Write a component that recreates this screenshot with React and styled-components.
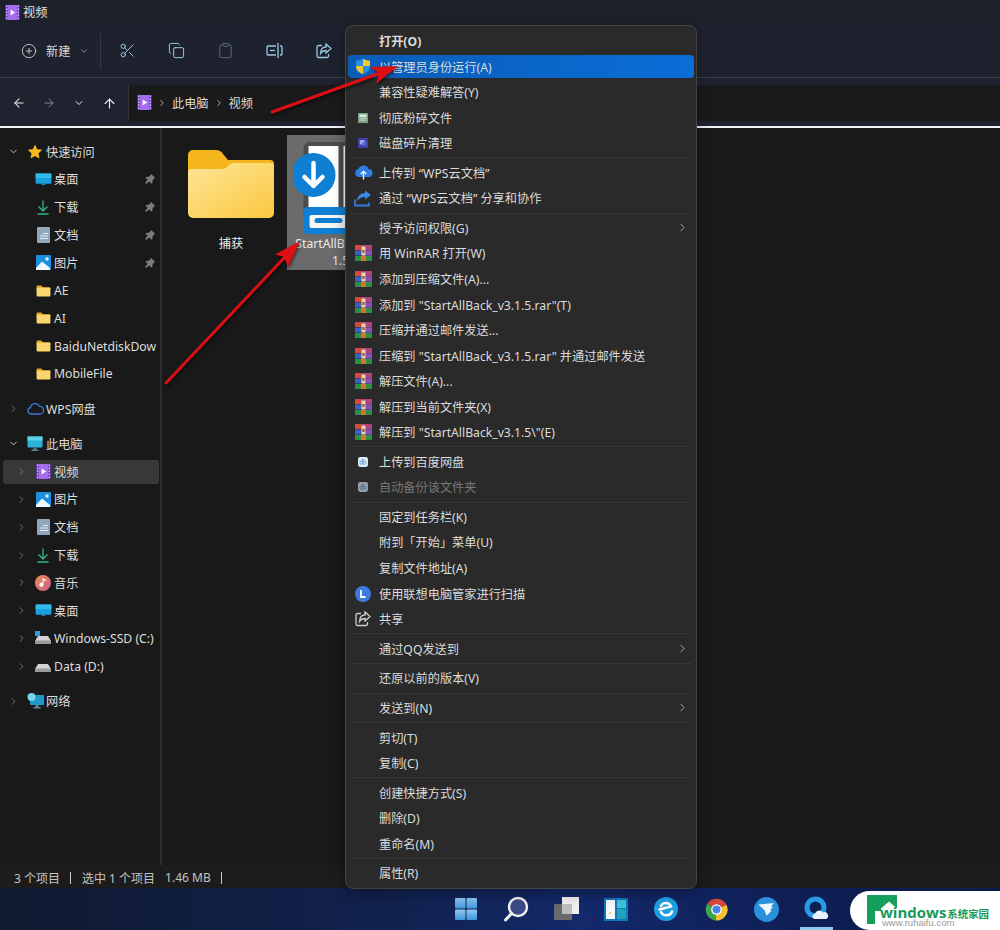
import React from "react";
import styled, { createGlobalStyle } from "styled-components";
import { ArrowLeft, ArrowRight, ArrowUp, ChevronDown, ChevronRight, CirclePlus, Scissors, Copy, Clipboard } from "lucide-react";

const Global = createGlobalStyle`
  html, body { margin: 0; padding: 0; background: #191919; }
  #root { width: 1000px; height: 930px; overflow: hidden; }
  * { box-sizing: border-box; }
`;

const FONT = `"Noto Sans", "Noto Sans CJK SC", sans-serif`;

const Page = styled.div`
  position: relative; width: 1000px; height: 930px; overflow: hidden;
  display: flex; flex-direction: column;
  font-family: ${FONT}; font-size: 12.2px; color: #e2e2e2; background: #191919;
`;
const TitleBar = styled.div`
  height: 26px; background: #1c212c; display: flex; align-items: center;
  padding: 0 0 2px 5px; gap: 3px;
`;
const Toolbar = styled.div`
  height: 52px; background: #1d222e; border-bottom: 1px solid #3c404b;
  display: flex; align-items: center; padding: 0 0 2px 21px;
`;
const NewButton = styled.div`display: flex; align-items: center; gap: 9px; color: #d9d9d9; width: 79px;`;
const ToolDivider = styled.div`width: 1px; height: 36px; background: #333844; margin-right: 2px;`;
const ToolSlot = styled.div`
  width: 49px; display: flex; justify-content: center; align-items: center;
  color: #98c8e2; opacity: ${p => (p.$dim ? 0.45 : 1)};
`;
const AddressBand = styled.div`
  height: 48px; background: #20232f; display: flex; padding: 7px 0 5px 0;
`;
const NavButtons = styled.div`width: 128px; display: flex; align-items: center; padding-left: 4px;`;
const NavSlot = styled.div`
  width: 30px; display: flex; align-items: center; justify-content: center;
  color: ${p => (p.$dim ? "#8a8d93" : "#ececec")};
`;
const AddressBox = styled.div`
  flex: 1; background: #1a1a1a; border-left: 1px solid #333;
  display: flex; align-items: center; padding: 0 0 1px 8px; gap: 5px;
`;
const Crumb = styled.span`color: #dcdcdc;`;
const WhiteLine = styled.div`height: 2px; background: #f2f2f2;`;
const Main = styled.div`flex: 1; min-height: 0; display: flex; background: #191919;`;
const Sidebar = styled.nav`
  width: 162px; padding: 9.800px 0 0 3px; border-right: 2px solid #2d2d2d;
  display: flex; flex-direction: column; overflow: hidden;
`;
const TreeRow = styled.div`
  width: 156px; height: 24px; flex: none; margin: ${p => (p.$gap ? "9.1px" : "1.9px")} 0 1.9px;
  display: flex; align-items: center; border-radius: 3px; overflow: hidden;
  padding-left: ${p => (p.$level ? 11 : 3)}px;
  background: ${p => (p.$selected ? "#383838" : "transparent")};
`;
const Twisty = styled.span`
  width: 14px; flex: none; display: flex; justify-content: center;
  color: ${p => (p.$open ? "#cfcfcf" : "#7d7d7d")};
`;
const TreeIcon = styled.span`
  width: 20px; height: 18px; margin-left: 5px; flex: none; display: flex; align-items: center; justify-content: center;
`;
const TreeLabel = styled.span`
  margin-left: 1px; white-space: nowrap; color: #dedede; flex: 0 0 auto;
`;
const PinMark = styled.span`
  position: absolute; left: 144px; display: flex;
`;
const Files = styled.section`
  flex: 1; padding: 7px 0 0 19px; display: flex; gap: 6px; align-items: flex-start;
`;
const Tile = styled.div`
  width: ${p => (p.$selected ? 107 : 100)}px; height: 135px; display: flex; flex-direction: column; align-items: center;
  padding-top: ${p => (p.$selected ? 7 : 15)}px;
  background: ${p => (p.$selected ? "#6b6b6b" : "transparent")};
`;
const TileIconWrap = styled.div`
  height: ${p => (p.$selected ? 93 : 85)}px; flex: none; width: 100%; display: flex; justify-content: center;
`;
const TileLabel = styled.div`
  text-align: center; line-height: 17px; color: #ececec; width: 96px; white-space: pre-line;
`;
const StatusBar = styled.div`
  height: 23px; background: #1c1c1c; display: flex; align-items: center; padding: 2px 0 0 14px; color: #c4c4c4; font-size: 12px;
`;
const StatusText = styled.span`margin-right: ${p => p.$gap || 0}px; white-space: pre;`;
const StatusBarTick = styled.span`width: 1px; height: 12px; background: #c8c8c8; margin-right: ${p => p.$gap || 0}px;`;
const Taskbar = styled.footer`
  height: 42px; display: flex; align-items: center; padding: 0 0 0 441px;
  background: linear-gradient(90deg, #101a30 0%, #11224f 40%, #13296a 58%, #0f1f55 80%, #0c1a48 100%);
`;
const TaskItem = styled.div`
  position: relative; width: 50px; height: 42px; display: flex; align-items: center; justify-content: center;
  ${p => p.$active && `&::after { content: ""; position: absolute; left: 9px; right: 8px; bottom: 0; height: 3px; background: #8fc9ee; }`}
`;
const Menu = styled.div`
  position: absolute; left: 345px; top: 25px; width: 352px; height: 864px; padding-top: 2.25px;
  background: #2a2a2a; border: 1px solid #434343; border-radius: 8px;
  box-shadow: 0 4px 14px rgba(0,0,0,.35);
  display: flex; flex-direction: column;
`;
const MenuRow = styled.div`
  height: 23px; flex: none; margin: 1.275px 2px; padding: 0 0 0 31px; position: relative;
  display: flex; align-items: center; border-radius: 4px; white-space: pre;
  color: ${p => (p.$disabled ? "#777" : "#dcdcdc")};
  font-weight: ${p => (p.$bold ? 700 : 400)};
  background: ${p => (p.$active ? "linear-gradient(90deg,#0a5cb6,#0a6ed8)" : "transparent")};
`;
const MenuIcon = styled.span`
  position: absolute; left: 3px; top: 0; width: 24px; height: 23px;
  display: flex; align-items: center; justify-content: center; opacity: ${p => (p.$dim ? 0.6 : 1)};
`;
const MenuArrow = styled.span`
  position: absolute; right: 5px; top: 5px; color: #cfcfcf; display: flex;
`;
const MenuSep = styled.div`height: 1px; flex: none; margin: 1.55px 5px; background: rgba(255,255,255,.065);`;
const Annotations = styled.svg`position: absolute; left: 0; top: 0; pointer-events: none;`;
const Watermark = styled.div`
  position: absolute; left: 850px; top: 891px; width: 150px; height: 39px; background: #fff;
  border-radius: 22px 0 0 22px; padding: 14px 0 0 30px; display: flex; flex-direction: column;
`;
const WatermarkLogo = styled.svg`position: absolute; left: 17px; top: 3px;`;
const BrandLine = styled.div`
  display: flex; align-items: baseline; color: #17995a; font-weight: 700; font-size: 15px; line-height: 14px; height: 13px;
  font-family: "Open Sans", sans-serif; position: relative;
`;
const BrandCJK = styled.span`font-size: 10.4px; font-family: "Noto Sans CJK SC", sans-serif; font-weight: 700; margin-left: 1px;`;
const BrandUrl = styled.div`color: #9a9a9a; font-size: 9.500px; line-height: 10px; font-family: "Liberation Sans", sans-serif; margin-left: 2px;`;

/* ---------- icons ---------- */
const VideoIcon = ({ s = 15 }) => (
  <svg width={s} height={s} viewBox="0 0 15 15">
    <rect x="0.5" y="0" width="14" height="15" fill="#7c3fc9" />
    <rect x="3" y="0" width="9" height="15" fill="#a56cf0" />
    {[1, 4, 7, 10, 13].map(y => <rect key={y} x="1" y={y - 0.5} width="1.4" height="1.4" fill="#d9c2ff" />)}
    {[1, 4, 7, 10, 13].map(y => <rect key={y} x="12.6" y={y - 0.5} width="1.4" height="1.4" fill="#d9c2ff" />)}
    <path d="M5.6 4.5 L10.2 7.5 L5.6 10.5Z" fill="#fff" />
  </svg>
);
const DesktopIcon = () => (
  <svg width="17" height="13" viewBox="0 0 18 14">
    <rect x="0.5" y="0.5" width="17" height="11" rx="1" fill="#18a1dc" />
    <rect x="0.5" y="0.5" width="17" height="5" rx="1" fill="#30bce8" />
    <rect x="7" y="11.5" width="4" height="1.5" fill="#2a7fae" />
  </svg>
);
const DownloadIcon = () => (
  <svg width="14" height="15" viewBox="0 0 14 15" fill="none" stroke="#35b48f" strokeWidth="1.3">
    <path d="M7 0.5V10.5M2.5 6.5L7 11L11.5 6.5M1.5 14H12.5" />
  </svg>
);
const DocIcon = () => (
  <svg width="13" height="16" viewBox="0 0 13 16">
    <rect width="13" height="16" rx="1" fill="#8fa6bd" />
    <path d="M6 6.5H11M3 9H11M3 11.5H11" stroke="#e7edf2" strokeWidth="1" />
  </svg>
);
const PictureIcon = () => (
  <svg width="15" height="15" viewBox="0 0 15 15">
    <rect width="15" height="15" rx="1" fill="#1d8fe0" />
    <circle cx="11" cy="4" r="1.7" fill="#dff3ff" />
    <path d="M0 13 L6 6.5 L14 13 V15 H0Z" fill="#eef8ff" />
  </svg>
);
const FolderSmall = () => (
  <svg width="15" height="12" viewBox="0 0 16 13">
    <path d="M0.5 1.5a1 1 0 0 1 1-1h4l2 2h7a1 1 0 0 1 1 1V5H0.5Z" fill="#e3a91e" />
    <rect x="0.5" y="3" width="15" height="9.5" rx="1" fill="#fbd66d" />
  </svg>
);
const StarIcon = () => (
  <svg width="16" height="15" viewBox="0 0 16 15"><path d="M8 0.5l2.2 4.7 5.1.6-3.8 3.5 1 5.1L8 11.9l-4.5 2.5 1-5.1L.7 5.8l5.1-.6Z" fill="#f7b91c" /></svg>
);
const PinIcon = () => (
  <svg width="12" height="12" viewBox="0 0 12 12" fill="#7c7c7c"><path d="M7 0.8l4.2 4.2-1.2.5-1.7 2.4.2 2.2-1 .6-2-2.3L2 11l-.9-.9 2.6-3.4-2.2-2 .6-1 2.2.2L6.700 2.100Z" /></svg>
);
const CloudOutline = () => (
  <svg width="17" height="13" viewBox="0 0 17 13" fill="none" stroke="#3f78d8" strokeWidth="1.3">
    <path d="M4 12a3.300 3.300 0 0 1-.5-6.500A4.700 4.700 0 0 1 12.400 4.400 3.800 3.800 0 0 1 13 12Z" />
  </svg>
);
const ComputerIcon = () => (
  <svg width="16" height="15" viewBox="0 0 16 15">
    <rect x="0.500" y="0.500" width="15" height="11" rx="1" fill="#2bb3d8" />
    <rect x="0.500" y="0.500" width="15" height="4" fill="#5ed0e8" />
    <path d="M6.500 11.500h3v2h-3zM4.500 13.500h7V15h-7z" fill="#5a7d92" />
  </svg>
);
const MusicIcon = () => (
  <svg width="16" height="16" viewBox="0 0 16 16">
    <defs><linearGradient id="mus" x1="0" y1="0" x2="1" y2="1"><stop offset="0" stopColor="#ef8d58" /><stop offset="1" stopColor="#c85f86" /></linearGradient></defs>
    <circle cx="8" cy="8" r="8" fill="url(#mus)" />
    <path d="M8.500 3.500v6.200a2 2 0 1 1-1-1.700V3.500Zm0 0 2.500 1.200v1.500L8.500 5Z" fill="#fff" />
  </svg>
);
const DriveIcon = ({ win }) => (
  <svg width="16" height="14" viewBox="0 0 16 14">
    {win && <rect x="0" y="0" width="5" height="5" fill="#2e9be0" />}
    <path d="M3 5h10l3 5H0Z" fill="#d4d4d4" />
    <rect x="0" y="9.500" width="16" height="3.500" rx="0.500" fill="#9a9a9a" />
  </svg>
);
const NetworkIcon = () => (
  <svg width="17" height="16" viewBox="0 0 17 16">
    <rect x="3" y="2" width="14" height="10" rx="1" fill="#1e9ac8" />
    <circle cx="4.500" cy="4" r="4" fill="#7bd3ea" />
    <path d="M8.500 12h3v2h-3zM6.500 14h7v1.500h-7z" fill="#5a8ca5" />
  </svg>
);
const RenameIcon = () => (
  <svg width="17" height="17" viewBox="0 0 17 17" fill="none" stroke="#98c8e2" strokeWidth="1.300">
    <path d="M10 4H2a1 1 0 0 0-1 1v7a1 1 0 0 0 1 1h8M14 4h1a1 1 0 0 1 1 1v7a1 1 0 0 1-1 1h-1M12 1v15" />
    <path d="M4 8.500h5" />
  </svg>
);
const ShareIcon = ({ c = "#98c8e2" }) => (
  <svg width="16" height="16" viewBox="0 0 16 16" fill="none" stroke={c} strokeWidth="1.300">
    <path d="M6 2.500H2.500a1.500 1.500 0 0 0-1.500 1.500v9a1.500 1.500 0 0 0 1.500 1.500h8.500a1.500 1.500 0 0 0 1.500-1.500v-2" />
    <path d="M10 1l5 4.500L10 10V7.500c-3 0-4.500 1.200-5.500 3 0-4 2-6.500 5.500-6.500Z" />
  </svg>
);
const ShieldIcon = () => (
  <svg width="16" height="17" viewBox="0 0 16 17">
    <path d="M8 0.500C6 2 3.500 2.500 1 2.500V9c0 3.500 3 6 7 7.500Z" fill="#2d8fe0" />
    <path d="M8 0.500c2 1.500 4.500 2 7 2V8H8Z" fill="#f4c430" />
    <path d="M8 8H1c0 4 3 6.500 7 8Z" fill="#f4c430" />
    <path d="M8 8h7c0 4-3 6.500-7 8Z" fill="#2d8fe0" />
  </svg>
);
const ShredIcon = () => (
  <svg width="10" height="10" viewBox="0 0 14 14">
    <rect width="14" height="14" fill="#7d9f8a" />
    <rect x="2" y="2" width="10" height="4" fill="#d8e8dc" />
    <path d="M2 8h10M2 10h10" stroke="#e6ecd8" strokeWidth="1" />
  </svg>
);
const DefragIcon = () => (
  <svg width="10" height="10" viewBox="0 0 14 14">
    <rect width="14" height="14" fill="#3c3fa8" />
    <rect x="2.500" y="3" width="7" height="6" fill="#9fa8e8" />
    <path d="M6 6h6v5H6Z" fill="#5a62cc" />
  </svg>
);
const CloudUp = () => (
  <svg width="19" height="15" viewBox="0 0 19 15">
    <path d="M5 12a4 4 0 0 1-.6-7.900A5.500 5.500 0 0 1 14.600 4 4 4 0 0 1 14.500 12Z" fill="#2f7de0" />
    <path d="M9.500 14.500V6.500M6.800 9L9.500 6.300 12.200 9" stroke="#fff" strokeWidth="1.300" fill="none" />
  </svg>
);
const ShareArrowBlue = () => (
  <svg width="18" height="17" viewBox="0 0 18 17" fill="none">
    <path d="M1 9.500v6h14v-3" stroke="#2f7de0" strokeWidth="1.800" />
    <path d="M11 0.500l6 4.500-6 4.500V7C7 7 4.500 8.500 3 11.500 3 6.500 6 3.500 11 3Z" fill="#3a8ae8" />
  </svg>
);
const RarIcon = () => (
  <svg width="17" height="16" viewBox="0 0 17 16">
    <rect x="0" y="0" width="17" height="5" fill="#b0427e" />
    <rect x="0" y="0" width="6" height="5" fill="#d44a3c" />
    <rect x="0" y="5.500" width="17" height="5" fill="#3a62c0" />
    <rect x="11" y="5.500" width="6" height="5" fill="#8a50b8" />
    <rect x="0" y="11" width="17" height="5" fill="#2d8f46" />
    <rect x="6" y="11" width="5" height="5" fill="#d8742a" />
    <rect x="6.500" y="1.500" width="4" height="9" fill="#e8d6b0" />
    <rect x="7.500" y="5" width="2" height="3" fill="#b04040" />
  </svg>
);
const BaiduIcon = () => (
  <svg width="10" height="10" viewBox="0 0 14 14">
    <rect width="14" height="14" rx="3" fill="#dcebf5" />
    <circle cx="5" cy="8" r="2.200" fill="none" stroke="#4a93d8" strokeWidth="1.200" />
    <circle cx="9" cy="8" r="2.200" fill="none" stroke="#7a9fc0" strokeWidth="1.200" />
    <circle cx="7" cy="5" r="1.700" fill="none" stroke="#4a93d8" strokeWidth="1" />
  </svg>
);
const LenovoIcon = () => (
  <svg width="16" height="16" viewBox="0 0 16 16">
    <circle cx="8" cy="8" r="8" fill="#3c7be0" />
    <path d="M6 4v7h4.500" stroke="#fff" strokeWidth="1.800" fill="none" />
  </svg>
);
const FolderLarge = () => (
  <svg width="86" height="68" viewBox="0 0 86 68">
    <defs>
      <linearGradient id="fld" x1="0" y1="0" x2="1" y2="1"><stop offset="0" stopColor="#fde596" /><stop offset="1" stopColor="#fbc83f" /></linearGradient>
    </defs>
    <path d="M0 5a5 5 0 0 1 5-5h23c3 0 5 1 7 4l5 6H82a4 4 0 0 1 4 4v20H0Z" fill="#f5b51c" />
    <path d="M0 22a3 3 0 0 1 3-3h30c3 0 5-1 7-3 2-2 3-3 6-3H82a4 4 0 0 1 4 4v46a5 5 0 0 1-5 5H5a5 5 0 0 1-5-5Z" fill="url(#fld)" />
  </svg>
);
const AppIcon = () => (
  <svg width="96" height="93" viewBox="3.500 0 96 93">
    <rect x="14" y="0" width="72" height="80" rx="6" fill="#4c4c4c" />
    <rect x="19" y="4" width="30" height="64" fill="#fff" />
    <rect x="54" y="4" width="28" height="64" fill="#fff" />
    <rect x="14" y="65" width="72" height="27" rx="4" fill="#0f7fd4" />
    <rect x="20" y="73" width="60" height="13" rx="2" fill="#f6f6f6" />
    <rect x="25" y="76" width="28" height="5" rx="2.500" fill="#0f7fd4" />
    <circle cx="24" cy="33" r="22" fill="#0f7fd4" />
    <path d="M24 21V44M15 35L24 44L33 35" stroke="#fff" strokeWidth="4.500" fill="none" strokeLinecap="round" strokeLinejoin="round" />
  </svg>
);
const WinLogo = () => (
  <svg width="22" height="22" viewBox="0 0 22 22">
    <defs><linearGradient id="wl" x1="0" y1="0" x2="0" y2="1"><stop offset="0" stopColor="#8ec9f0" /><stop offset="1" stopColor="#3f98dc" /></linearGradient></defs>
    <rect x="0" y="0" width="10.500" height="10.500" rx="1" fill="url(#wl)" />
    <rect x="11.500" y="0" width="10.500" height="10.500" rx="1" fill="url(#wl)" />
    <rect x="0" y="11.500" width="10.500" height="10.500" rx="1" fill="url(#wl)" />
    <rect x="11.500" y="11.500" width="10.500" height="10.500" rx="1" fill="url(#wl)" />
  </svg>
);
const SearchGlyph = () => (
  <svg width="26" height="26" viewBox="0 0 26 26">
    <circle cx="15" cy="11" r="9" fill="#3d4a88" stroke="#f2f2f2" strokeWidth="2.400" />
    <path d="M8.500 17.500L2.500 24" stroke="#f2f2f2" strokeWidth="3" strokeLinecap="round" />
  </svg>
);
const TaskViewGlyph = () => (
  <svg width="25" height="24" viewBox="0 0 25 24">
    <rect x="8" y="0" width="17" height="17" fill="#f0f0f0" />
    <rect x="0" y="7" width="18" height="16" rx="1" fill="#6a6a6a" />
    <rect x="8" y="7" width="10" height="10" fill="#bdbdbd" />
  </svg>
);
const WidgetsGlyph = () => (
  <svg width="24" height="23" viewBox="0 0 24 23">
    <rect width="24" height="23" fill="#1474c4" />
    <rect x="2" y="2" width="9" height="19" fill="#f4f6f8" />
    <rect x="13" y="2" width="9" height="8" fill="#3bc4d8" />
    <rect x="13" y="11" width="9" height="10" fill="#1fa3b8" />
    <circle cx="6" cy="15" r="1" fill="#f0c060" />
  </svg>
);
const EdgeGlyph = () => (
  <svg width="24" height="24" viewBox="0 0 24 24">
    <circle cx="12" cy="12" r="12" fill="#1f9fe2" />
    <path d="M5.500 12.500L17 9.500A5.500 5.500 0 0 0 7 9M18 14.500A6 6 0 0 1 7 15" fill="none" stroke="#fff" strokeWidth="2.500" strokeLinecap="round" />
  </svg>
);
const ChromeGlyph = () => (
  <svg width="23" height="23" viewBox="0 0 24 24">
    <path d="M12 12L2.500 6A11.500 11.500 0 0 1 22.400 7Z" fill="#d8453a" />
    <path d="M12 12L22.400 7A11.500 11.500 0 0 1 11 23.500Z" fill="#f3c230" />
    <path d="M12 12L11 23.500A11.500 11.500 0 0 1 2.500 6Z" fill="#3da450" />
    <circle cx="12" cy="12" r="5.500" fill="#fff" />
    <circle cx="12" cy="12" r="4.200" fill="#4a86e8" />
  </svg>
);
const WingGlyph = () => (
  <svg width="25" height="25" viewBox="0 0 25 25">
    <circle cx="12.500" cy="12.500" r="12.500" fill="#2a8fdc" />
    <path d="M4.500 7.500L20 6l-3 3.500 2 .5-3 3 1.500.8-5 5-2-5.500L4.500 7.500Z" fill="#eef7ff" />
  </svg>
);
const QqBrowserGlyph = () => (
  <svg width="25" height="27" viewBox="0 0 25 27">
    <circle cx="11.500" cy="11.500" r="8.500" fill="#0e2050" stroke="#2a9ae8" strokeWidth="5" />
    <path d="M10 23a3 3 0 0 1 1-5.500 4.500 4.500 0 0 1 8-1 3.500 3.500 0 0 1 3 6.500Z" fill="#e8f0f8" />
  </svg>
);

/* ---------- data ---------- */
const tree = [
  { label: "快速访问", icon: <StarIcon />, open: true },
  { label: "桌面", icon: <DesktopIcon />, level: 1, pin: true, leaf: true },
  { label: "下载", icon: <DownloadIcon />, level: 1, pin: true, leaf: true },
  { label: "文档", icon: <DocIcon />, level: 1, pin: true, leaf: true },
  { label: "图片", icon: <PictureIcon />, level: 1, pin: true, leaf: true },
  { label: "AE", icon: <FolderSmall />, level: 1, leaf: true },
  { label: "AI", icon: <FolderSmall />, level: 1, leaf: true },
  { label: "BaiduNetdiskDow", icon: <FolderSmall />, level: 1, leaf: true },
  { label: "MobileFile", icon: <FolderSmall />, level: 1, leaf: true },
  { label: "WPS网盘", icon: <CloudOutline />, gap: true },
  { label: "此电脑", icon: <ComputerIcon />, open: true, gap: true },
  { label: "视频", icon: <VideoIcon />, level: 1, selected: true },
  { label: "图片", icon: <PictureIcon />, level: 1 },
  { label: "文档", icon: <DocIcon />, level: 1 },
  { label: "下载", icon: <DownloadIcon />, level: 1 },
  { label: "音乐", icon: <MusicIcon />, level: 1 },
  { label: "桌面", icon: <DesktopIcon />, level: 1 },
  { label: "Windows-SSD (C:)", icon: <DriveIcon win />, level: 1 },
  { label: "Data (D:)", icon: <DriveIcon />, level: 1 },
  { label: "网络", icon: <NetworkIcon />, gap: true },
];

const SEP = { sep: true };
const rar = <RarIcon />;
const menu = [
  { t: "打开(O)", bold: true },
  { t: "以管理员身份运行(A)", icon: <ShieldIcon />, active: true },
  { t: "兼容性疑难解答(Y)" },
  { t: "彻底粉碎文件", icon: <ShredIcon /> },
  { t: "磁盘碎片清理", icon: <DefragIcon /> },
  SEP,
  { t: "上传到 “WPS云文档”", icon: <CloudUp /> },
  { t: "通过 “WPS云文档” 分享和协作", icon: <ShareArrowBlue /> },
  SEP,
  { t: "授予访问权限(G)", sub: true },
  { t: "用 WinRAR 打开(W)", icon: rar },
  { t: "添加到压缩文件(A)...", icon: rar },
  { t: "添加到 \"StartAllBack_v3.1.5.rar\"(T)", icon: rar },
  { t: "压缩并通过邮件发送...", icon: rar },
  { t: "压缩到 \"StartAllBack_v3.1.5.rar\" 并通过邮件发送", icon: rar },
  { t: "解压文件(A)...", icon: rar },
  { t: "解压到当前文件夹(X)", icon: rar },
  { t: "解压到 \"StartAllBack_v3.1.5\\\"(E)", icon: rar },
  SEP,
  { t: "上传到百度网盘", icon: <BaiduIcon /> },
  { t: "自动备份该文件夹", icon: <BaiduIcon />, disabled: true },
  SEP,
  { t: "固定到任务栏(K)" },
  { t: "附到「开始」菜单(U)" },
  { t: "复制文件地址(A)" },
  { t: "使用联想电脑管家进行扫描", icon: <LenovoIcon /> },
  { t: "共享", icon: <ShareIcon c="#d0d0d0" /> },
  SEP,
  { t: "通过QQ发送到", sub: true },
  SEP,
  { t: "还原以前的版本(V)" },
  SEP,
  { t: "发送到(N)", sub: true },
  SEP,
  { t: "剪切(T)" },
  { t: "复制(C)" },
  SEP,
  { t: "创建快捷方式(S)" },
  { t: "删除(D)" },
  { t: "重命名(M)" },
  SEP,
  { t: "属性(R)" },
];

const taskIcons = [<WinLogo />, <SearchGlyph />, <TaskViewGlyph />, <WidgetsGlyph />, <EdgeGlyph />, <ChromeGlyph />, <WingGlyph />, <QqBrowserGlyph />];

export default function App() {
  return (
    <Page>
      <Global />
      <TitleBar><VideoIcon /><span>视频</span></TitleBar>
      <Toolbar>
        <NewButton>
          <CirclePlus size={16} strokeWidth={1.3} color="#d6d6d6" />
          <span>新建</span>
          <ChevronDown size={10} color="#9a9a9a" />
        </NewButton>
        <ToolDivider />
        <ToolSlot><Scissors size={17} strokeWidth={1.4} /></ToolSlot>
        <ToolSlot><Copy size={17} strokeWidth={1.4} /></ToolSlot>
        <ToolSlot $dim><Clipboard size={17} strokeWidth={1.4} /></ToolSlot>
        <ToolSlot><RenameIcon /></ToolSlot>
        <ToolSlot><ShareIcon /></ToolSlot>
      </Toolbar>
      <AddressBand>
        <NavButtons>
          <NavSlot><ArrowLeft size={14} strokeWidth={1.8} /></NavSlot>
          <NavSlot $dim><ArrowRight size={14} strokeWidth={1.6} /></NavSlot>
          <NavSlot><ChevronDown size={12} strokeWidth={2} /></NavSlot>
          <NavSlot><ArrowUp size={15} strokeWidth={1.8} /></NavSlot>
        </NavButtons>
        <AddressBox>
          <VideoIcon />
          <ChevronRight size={10} color="#c8c8c8" strokeWidth={2} />
          <Crumb>此电脑</Crumb>
          <ChevronRight size={10} color="#c8c8c8" strokeWidth={2} />
          <Crumb>视频</Crumb>
        </AddressBox>
      </AddressBand>
      <WhiteLine />
      <Main>
        <Sidebar>
          {tree.map((r, i) => (
            <TreeRow key={i} $level={r.level} $selected={r.selected} $gap={r.gap}>
              <Twisty $open={r.open}>
                {r.leaf ? null : r.open ? <ChevronDown size={11} strokeWidth={2} /> : <ChevronRight size={11} strokeWidth={2} />}
              </Twisty>
              <TreeIcon>{r.icon}</TreeIcon>
              <TreeLabel>{r.label}</TreeLabel>
              {r.pin && <PinMark><PinIcon /></PinMark>}
            </TreeRow>
          ))}
        </Sidebar>
        <Files>
          <Tile>
            <TileIconWrap><FolderLarge /></TileIconWrap>
            <TileLabel>捕获</TileLabel>
          </Tile>
          <Tile $selected>
            <TileIconWrap $selected><AppIcon /></TileIconWrap>
            <TileLabel>{"StartAllBack_v3.\n1.5"}</TileLabel>
          </Tile>
        </Files>
      </Main>
      <StatusBar>
        <StatusText $gap={10}>3 个项目</StatusText>
        <StatusBarTick $gap={11} />
        <StatusText $gap={10}>选中 1 个项目</StatusText>
        <StatusText $gap={10}>1.46 MB</StatusText>
        <StatusBarTick />
      </StatusBar>
      <Taskbar>
        {taskIcons.map((ic, i) => <TaskItem key={i} $active={i === 7}>{ic}</TaskItem>)}
      </Taskbar>

      <Menu>
        {menu.map((m, i) => m.sep ? <MenuSep key={i} /> : (
          <MenuRow key={i} $bold={m.bold} $active={m.active} $disabled={m.disabled}>
            {m.icon && <MenuIcon $dim={m.disabled}>{m.icon}</MenuIcon>}
            {m.t}
            {m.sub && <MenuArrow><ChevronRight size={13} strokeWidth={1.4} /></MenuArrow>}
          </MenuRow>
        ))}
      </Menu>

      <Annotations width="1000" height="930" viewBox="0 0 1000 930">
        <g fill="#de0f12" stroke="none" style={{ filter: "drop-shadow(1px 2px 1.5px rgba(0,0,0,.55))" }}>
          <path d="M272 112 L380 73" stroke="#de0f12" strokeWidth="3" strokeLinecap="round" />
          <path d="M398 66 L376 84 L379 73 L370 67Z" />
          <path d="M166 383 L285 257" stroke="#de0f12" strokeWidth="3" strokeLinecap="round" />
          <path d="M300 241 L288 267 L284 257 L275 254.500Z" />
        </g>
      </Annotations>

      <Watermark>
        <WatermarkLogo width="32" height="30" viewBox="0 0 32 30">
          <path d="M0 1H30V14L22 7 L14 14 V17 H8 V30 H0Z" fill="#14a05a" />
          <path d="M14 14L22 7 30 14" fill="none" stroke="#14a05a" strokeWidth="1" />
        </WatermarkLogo>
        <BrandLine>windows<BrandCJK>系统家园</BrandCJK></BrandLine>
        <BrandUrl>www.ruhaifu.com</BrandUrl>
      </Watermark>
    </Page>
  );
}
